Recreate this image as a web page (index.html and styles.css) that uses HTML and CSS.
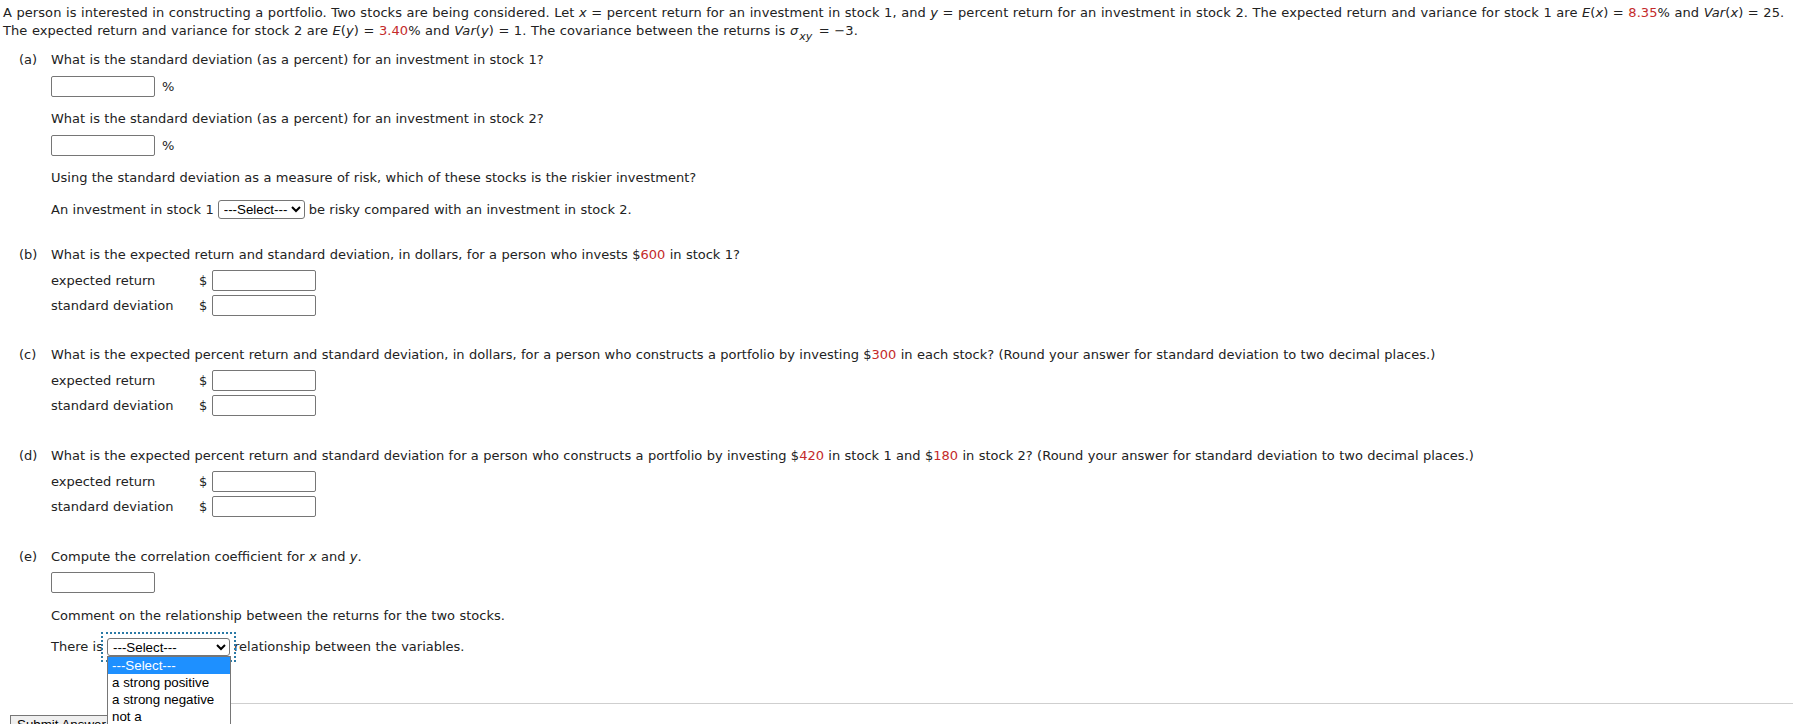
FILE: index.html
```html
<!DOCTYPE html>
<html lang="en">
<head>
<meta charset="utf-8">
<title>Portfolio question</title>
<link rel="stylesheet" href="styles.css">
</head>
<body>
<div class="page">
  <p class="intro">A person is interested in constructing a portfolio. Two stocks are being considered. Let <i>x</i> = percent return for an investment in stock 1, and <i>y</i> = percent return for an investment in stock 2. The expected return and variance for stock 1 are <i>E</i>(<i>x</i>) = <span class="num">8.35</span>% and <i>Var</i>(<i>x</i>) = 25.<br>The expected return and variance for stock 2 are <i>E</i>(<i>y</i>) = <span class="num">3.40</span>% and <i>Var</i>(<i>y</i>) = 1. The covariance between the returns is <i>σ</i><sub><i>xy</i></sub> = −3.</p>

  <section class="part part-a">
    <span class="lbl">(a)</span>
    <div class="content">
      <div class="q">What is the standard deviation (as a percent) for an investment in stock 1?</div>
      <div class="ans ans-first"><input class="box" type="text"><span class="unit">%</span></div>
      <div class="q q-next">What is the standard deviation (as a percent) for an investment in stock 2?</div>
      <div class="ans ans-first"><input class="box" type="text"><span class="unit">%</span></div>
      <div class="q q-next">Using the standard deviation as a measure of risk, which of these stocks is the riskier investment?</div>
      <div class="selrow selrow-a">
        <span>An investment in stock 1</span>
        <select class="sel"><option>---Select---</option><option>would</option><option>would not</option></select>
        <span>be risky compared with an investment in stock 2.</span>
      </div>
    </div>
  </section>

  <section class="part part-b">
    <span class="lbl">(b)</span>
    <div class="content">
      <div class="q">What is the expected return and standard deviation, in dollars, for a person who invests $<span class="num">600</span> in stock 1?</div>
      <div class="pair pair-first"><span class="plabel">expected return</span><span class="cur">$</span><input class="box" type="text"></div>
      <div class="pair pair-second"><span class="plabel">standard deviation</span><span class="cur">$</span><input class="box" type="text"></div>
    </div>
  </section>

  <section class="part part-c">
    <span class="lbl">(c)</span>
    <div class="content">
      <div class="q">What is the expected percent return and standard deviation, in dollars, for a person who constructs a portfolio by investing $<span class="num">300</span> in each stock? (Round your answer for standard deviation to two decimal places.)</div>
      <div class="pair pair-first"><span class="plabel">expected return</span><span class="cur">$</span><input class="box" type="text"></div>
      <div class="pair pair-second"><span class="plabel">standard deviation</span><span class="cur">$</span><input class="box" type="text"></div>
    </div>
  </section>

  <section class="part part-d">
    <span class="lbl">(d)</span>
    <div class="content">
      <div class="q">What is the expected percent return and standard deviation for a person who constructs a portfolio by investing $<span class="num">420</span> in stock 1 and $<span class="num">180</span> in stock 2? (Round your answer for standard deviation to two decimal places.)</div>
      <div class="pair pair-first"><span class="plabel">expected return</span><span class="cur">$</span><input class="box" type="text"></div>
      <div class="pair pair-second"><span class="plabel">standard deviation</span><span class="cur">$</span><input class="box" type="text"></div>
    </div>
  </section>

  <section class="part part-e">
    <span class="lbl">(e)</span>
    <div class="content">
      <div class="q">Compute the correlation coefficient for <i>x</i> and <i>y</i>.</div>
      <div class="ans ans-e"><input class="box" type="text"></div>
      <div class="q q-comment">Comment on the relationship between the returns for the two stocks.</div>
      <div class="selrow selrow-e">
        <span>There is</span>
        <span class="focuswrap">
          <select class="sel sel-wide"><option>---Select---</option><option>a strong positive</option><option>a strong negative</option><option>not a</option></select>
          <span class="dd">
            <span class="opt opt-active">---Select---</span>
            <span class="opt">a strong positive</span>
            <span class="opt">a strong negative</span>
            <span class="opt">not a</span>
          </span>
        </span>
        <span>relationship between the variables.</span>
      </div>
    </div>
  </section>

  <div class="footer">
    <div class="rule"></div>
    <button class="submit" type="button">Submit Answer</button>
  </div>
</div>
</body>
</html>
```

FILE: styles.css
```css
html, body {
  margin: 0;
  padding: 0;
  overflow: hidden;
  background: #fff;
}

body {
  font-family: "DejaVu Sans", Verdana, sans-serif;
  font-size: 13px;
  word-spacing: 0.25px;
  color: #222;
}

.page {
  width: 1793px;
  height: 724px;
  overflow: hidden;
}

.intro {
  margin: 0;
  padding: 4px 0 0 3px;
  line-height: 18px;
  letter-spacing: 0.07px;
  word-spacing: 0.3px;
  white-space: nowrap;
}

.intro sub {
  font-size: 11px;
  line-height: 0;
  vertical-align: -5px;
  margin-left: 1px;
  margin-right: 2px;
}

.num {
  color: #c42a2a;
}

.part {
  display: flex;
  padding-left: 19px;
}

.lbl {
  width: 32px;
  flex: none;
  line-height: 18px;
}

.content {
  flex: 1;
}

.q {
  line-height: 18px;
  white-space: nowrap;
}

.part-a { margin-top: 11px; }
.part-b { margin-top: 27px; }
.part-c { margin-top: 30px; }
.part-d { margin-top: 31px; }
.part-e { margin-top: 31px; }

.ans {
  display: flex;
  align-items: center;
  height: 21px;
}

.ans-first { margin-top: 7px; }
.q-next { margin-top: 13px; }
.ans-e { margin-top: 6px; }
.q-comment { margin-top: 14px; }

.box {
  box-sizing: border-box;
  width: 104px;
  height: 21px;
  margin: 0;
  padding: 1px 3px;
  border: 1px solid #767676;
  border-radius: 2px;
  background: #fff;
  font: 13px "DejaVu Sans", sans-serif;
}

.unit {
  margin-left: 7px;
}

.pair {
  display: flex;
  align-items: center;
  height: 21px;
}

.pair-first { margin-top: 6px; }
.pair-second { margin-top: 4px; }

.plabel {
  width: 148px;
  flex: none;
}

.cur {
  width: 13px;
  flex: none;
}

.selrow {
  display: flex;
  align-items: center;
  gap: 4px;
  white-space: nowrap;
}

.selrow-a { margin-top: 12px; height: 20px; }
.selrow-e { margin-top: 12px; height: 19px; }

.sel {
  box-sizing: border-box;
  height: 19px;
  margin: 0;
  padding: 0 0 0 1px;
  border: 1px solid #767676;
  border-radius: 3px;
  background: #fff;
  color: #000;
  font-family: "Liberation Sans", Arial, sans-serif;
  font-size: 13.33px;
  word-spacing: 0;
}

.sel-wide {
  width: 123px;
  height: 18px;
}

.focuswrap {
  position: relative;
  display: inline-flex;
  outline: 2px dotted #2b7aa6;
  outline-offset: 4px;
}

.dd {
  position: absolute;
  left: 0;
  top: 100%;
  width: 124px;
  box-sizing: border-box;
  border: 1px solid #767676;
  background: #fff;
  color: #000;
  font-family: "Liberation Sans", Arial, sans-serif;
  font-size: 13.33px;
  word-spacing: 0;
  z-index: 5;
}

.opt {
  display: block;
  height: 17px;
  line-height: 17px;
  padding-left: 4px;
}

.opt-active {
  background: #1e90ff;
  color: #fff;
}

.footer {
  margin-top: 47px;
}

.rule {
  height: 0;
  margin-left: 180px;
  border-top: 1px solid #cfcfcf;
}

.submit {
  margin: 11px 0 0 10px;
  padding: 1px 6px;
  border: 1px solid #767676;
  border-radius: 0;
  background: #efefef;
  color: #000;
  font-family: "Liberation Sans", Arial, sans-serif;
  font-size: 13.33px;
  word-spacing: 0;
}
```
